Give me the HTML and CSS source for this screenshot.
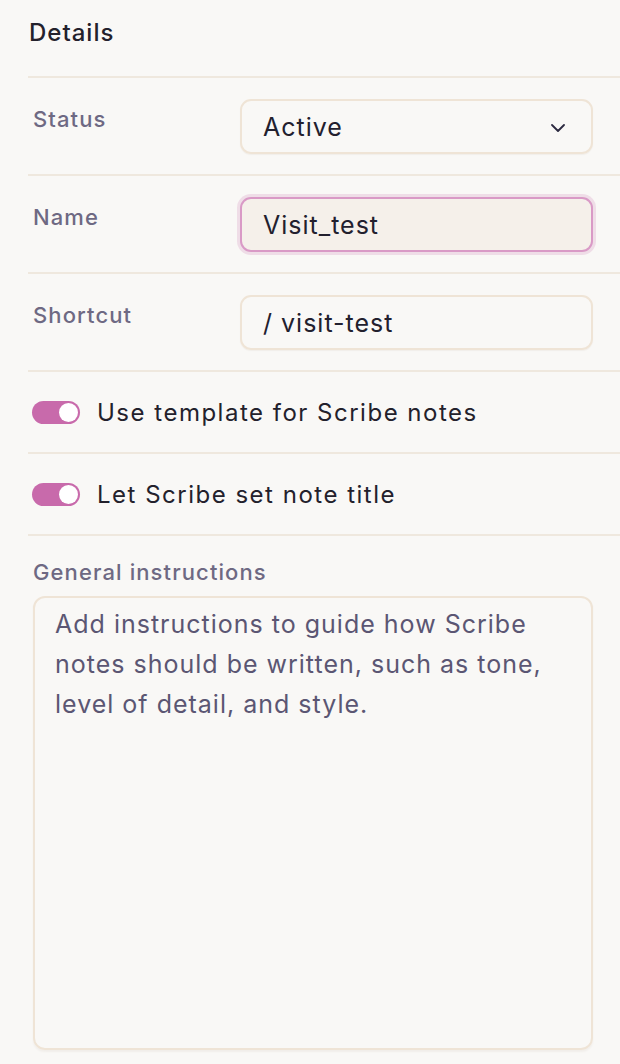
FILE: index.html
```html
<!DOCTYPE html>
<html>
<head>
<meta charset="utf-8">
<link rel="stylesheet" href="styles.css">
</head>
<body>
<div class="panel">
  <h2 class="title">Details</h2>
  <div class="row field-row">
    <div class="label">Status</div>
    <div class="control select">
      <span>Active</span>
      <svg class="chev" width="14" height="8" viewBox="0 0 14 8"><path d="M1 1l6 6 6-6" fill="none" stroke="#2c2a40" stroke-width="1.8" stroke-linecap="round" stroke-linejoin="round"/></svg>
    </div>
  </div>
  <div class="row field-row">
    <div class="label">Name</div>
    <div class="control input focused"><span>Visit_test</span></div>
  </div>
  <div class="row field-row">
    <div class="label">Shortcut</div>
    <div class="control input"><span>/ visit-test</span></div>
  </div>
  <div class="row toggle-row">
    <span class="toggle"><span class="knob"></span></span>
    <span class="toggle-label">Use template for Scribe notes</span>
  </div>
  <div class="row toggle-row">
    <span class="toggle"><span class="knob"></span></span>
    <span class="toggle-label">Let Scribe set note title</span>
  </div>
  <div class="instructions">
    <div class="label gi">General instructions</div>
    <div class="textarea">Add instructions to guide how Scribe notes should be written, such as tone, level of detail, and style.</div>
  </div>
</div>
</body>
</html>
```
FILE: styles.css
```css
html, body {
  margin: 0;
  padding: 0;
  background: #f9f8f6;
}
body {
  font-family: Inter, "Open Sans", sans-serif;
  color: #22202e;
  height: 1064px;
  overflow: hidden;
}
.panel {
  padding-left: 28px;
}
.title {
  margin: 0;
  padding: 18px 0 0 1px;
  height: 78px;
  box-sizing: border-box;
  font-size: 24px;
  letter-spacing: 1px;
  font-weight: 500;
  line-height: 30px;
  color: #23212c;
  border-bottom: 2px solid #efe8de;
}
.row {
  display: flex;
  border-bottom: 2px solid #efe8de;
  box-sizing: border-box;
}
.field-row {
  height: 98px;
  padding: 21px 27px 0 5px;
  align-items: flex-start;
}
.label {
  width: 207px;
  flex: none;
  font-size: 22px;
  letter-spacing: 1.1px;
  line-height: 26px;
  color: #6e6983;
  font-weight: 500;
  padding-top: 7px;
}
.control {
  flex: 1;
  height: 55px;
  box-sizing: border-box;
  border: 2px solid #efe4d6;
  border-radius: 11px;
  display: flex;
  align-items: center;
  padding: 0 21px;
  font-size: 25px;
  letter-spacing: 1px;
  color: #22202e;
  box-shadow: 0 1px 1px rgba(120, 90, 50, 0.06);
}
.select {
  justify-content: space-between;
  padding-right: 26px;
}
.chev {
  margin-top: 2px;
}
.focused {
  border-color: #d99ac6;
  background: #f5f0ea;
  box-shadow: 0 0 0 3px #efdde7;
}
.toggle-row {
  height: 82px;
  align-items: center;
  padding-left: 4px;
}
.toggle {
  width: 48px;
  height: 23px;
  border-radius: 12px;
  background: #c86aab;
  position: relative;
  flex: none;
  margin-right: 17px;
}
.knob {
  position: absolute;
  right: 2px;
  top: 2px;
  width: 19px;
  height: 19px;
  border-radius: 50%;
  background: #ffffff;
}
.toggle-label {
  font-size: 24px;
  letter-spacing: 1.5px;
  color: #23212c;
}
.instructions {
  padding: 23px 27px 0 5px;
}
.gi {
  width: auto;
  padding-top: 0;
  margin-bottom: 11px;
}
.textarea {
  height: 454px;
  box-sizing: border-box;
  border: 2px solid #efe4d6;
  border-radius: 12px;
  padding: 6px 20px;
  font-size: 25px;
  letter-spacing: 1px;
  line-height: 40px;
  color: #5b5673;
  box-shadow: 0 2px 2px rgba(120, 90, 50, 0.06);
}
```
